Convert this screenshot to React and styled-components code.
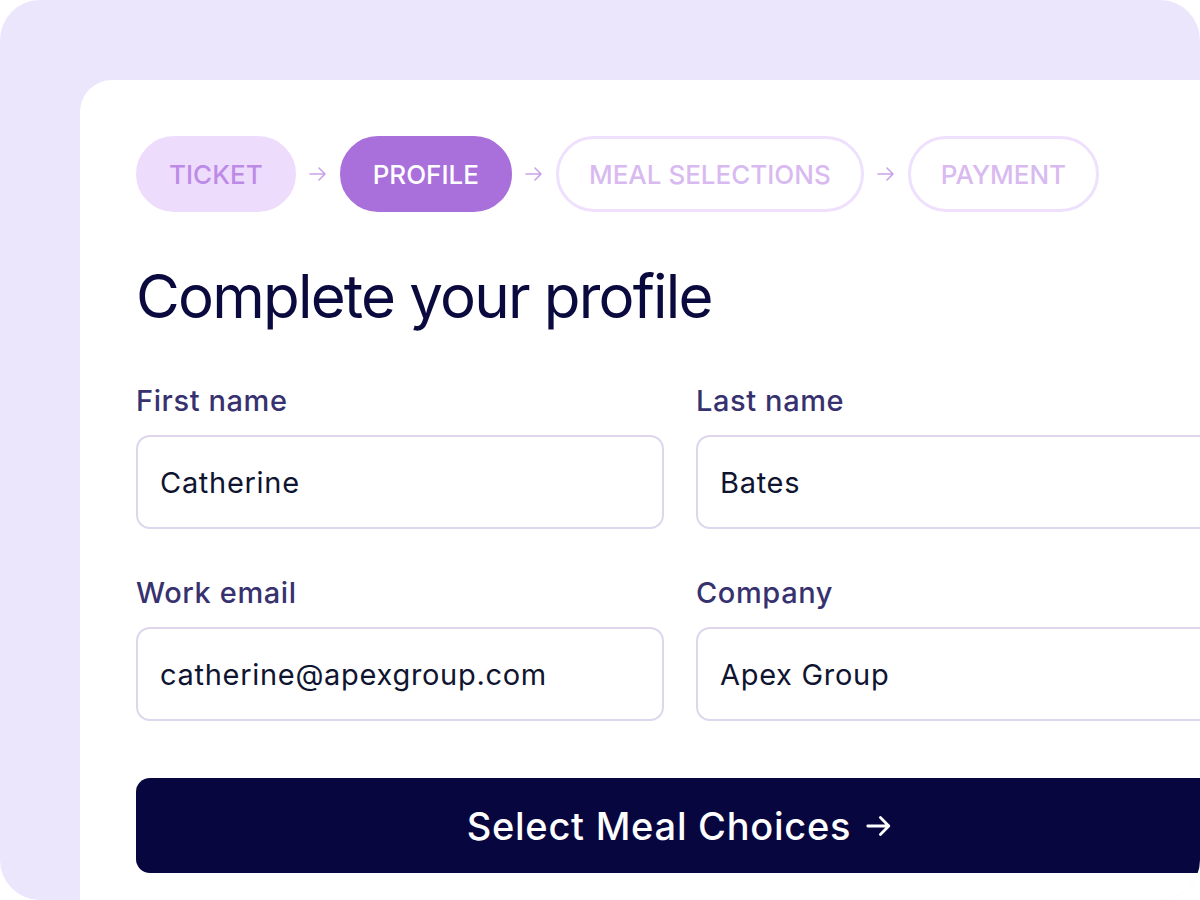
import React from 'react'
import styled, { createGlobalStyle } from 'styled-components'

const GlobalStyle = createGlobalStyle`
  html, body {
    margin: 0;
    padding: 0;
    background: #ffffff;
  }
  body {
    font-family: Inter, "Noto Sans", sans-serif;
    -webkit-font-smoothing: antialiased;
  }
`

const steps = [
  { label: 'TICKET', state: 'done' },
  { label: 'PROFILE', state: 'active' },
  { label: 'MEAL SELECTIONS', state: 'todo' },
  { label: 'PAYMENT', state: 'todo' },
]

const fields = [
  { label: 'First name', value: 'Catherine' },
  { label: 'Last name', value: 'Bates' },
  { label: 'Work email', value: 'catherine@apexgroup.com' },
  { label: 'Company', value: 'Apex Group' },
]

const Arrow = ({ size = 20, color = 'currentColor', stroke = 2 }) => (
  <svg width={size} height={size} viewBox='0 0 20 20' fill='none'>
    <path d='M2 10h15M11 4l6 6-6 6' stroke={color} strokeWidth={stroke} strokeLinecap='round' strokeLinejoin='round' />
  </svg>
)

export default function App () {
  return (
    <>
      <GlobalStyle />
      <Backdrop>
        <Card>
          <Steps>
            {steps.map((s, i) => (
              <React.Fragment key={s.label}>
                {i > 0 && <StepArrow><Arrow size={20} stroke={1.6} /></StepArrow>}
                <Step $state={s.state}>{s.label}</Step>
              </React.Fragment>
            ))}
          </Steps>
          <Title>Complete your profile</Title>
          <Form>
            {fields.map((f) => (
              <Field key={f.label}>
                <Label>{f.label}</Label>
                <Input>{f.value}</Input>
              </Field>
            ))}
          </Form>
          <Submit type='button'>
            Select Meal Choices
            <Arrow size={28} stroke={2} />
          </Submit>
        </Card>
      </Backdrop>
    </>
  )
}

const Backdrop = styled.div`
  width: 1200px;
  height: 900px;
  box-sizing: border-box;
  background: #ece6fd;
  border-radius: 40px;
  padding: 80px 0 0 80px;
  overflow: hidden;
`

const Card = styled.div`
  width: 1200px;
  height: 820px;
  box-sizing: border-box;
  background: #ffffff;
  border-top-left-radius: 32px;
  padding: 56px;
`

const Steps = styled.div`
  display: flex;
  align-items: center;
  gap: 12px;
`

const stepColors = {
  done: { bg: '#eedcfd', border: '#eedcfd', color: '#bd8be6' },
  active: { bg: '#a970db', border: '#a970db', color: '#ffffff' },
  todo: { bg: '#ffffff', border: '#efe0fd', color: '#d8baf0' },
}

const Step = styled.div`
  height: 76px;
  box-sizing: border-box;
  display: flex;
  align-items: center;
  padding: 0 30px;
  border-radius: 38px;
  border: 3px solid ${(p) => stepColors[p.$state].border};
  background: ${(p) => stepColors[p.$state].bg};
  color: ${(p) => stepColors[p.$state].color};
  font-size: 26px;
  font-weight: 500;
`

const StepArrow = styled.span`
  display: flex;
  color: #c9a2ec;
`

const Title = styled.h1`
  margin: 48px 0 52px;
  font-size: 60px;
  line-height: 72px;
  font-weight: 400;
  color: #0a0a3f;
  letter-spacing: -1.8px;
`

const Form = styled.div`
  display: grid;
  grid-template-columns: 528px 528px;
  column-gap: 32px;
  row-gap: 47px;
`

const Field = styled.div`
  display: flex;
  flex-direction: column;
  gap: 17px;
`

const Label = styled.div`
  font-size: 29px;
  line-height: 34px;
  font-weight: 500;
  color: #37326f;
  letter-spacing: 0.6px;
`

const Input = styled.div`
  height: 94px;
  box-sizing: border-box;
  display: flex;
  align-items: center;
  padding: 0 22px;
  border: 2px solid #ded6ec;
  border-radius: 14px;
  font-size: 29px;
  color: #0f1430;
  letter-spacing: 0.7px;
`

const Submit = styled.button`
  margin-top: 57px;
  width: 1088px;
  height: 95px;
  border: none;
  border-radius: 14px;
  background: #07063f;
  color: #ffffff;
  font-family: inherit;
  font-size: 38px;
  font-weight: 500;
  letter-spacing: 0.75px;
  display: flex;
  align-items: center;
  justify-content: center;
  gap: 14px;
  cursor: pointer;
`
